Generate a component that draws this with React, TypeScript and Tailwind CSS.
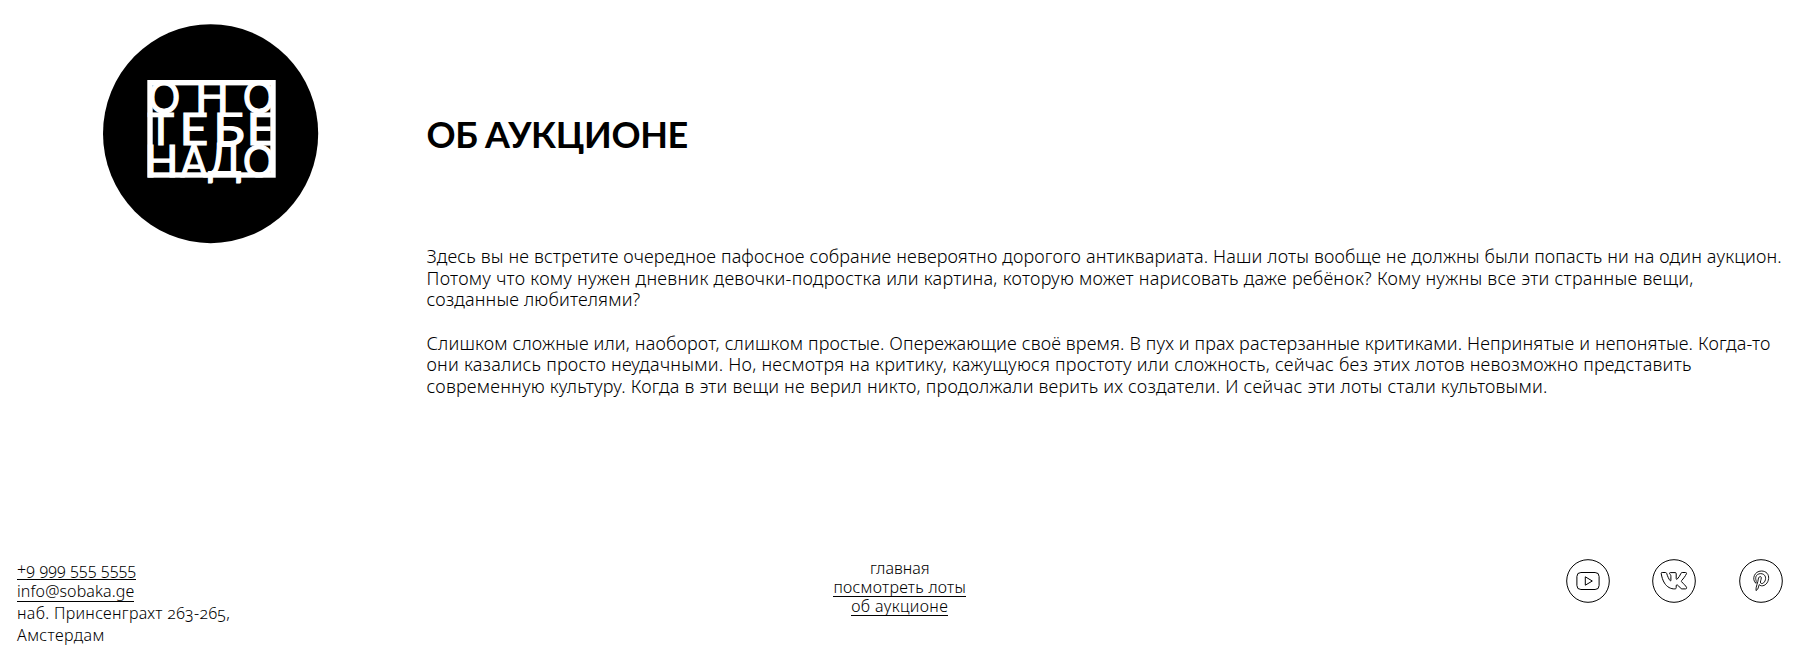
import type { ReactNode } from "react";

type Line = { text: string; className: string };

const intro: Line[] = [
  { text: "Здесь вы не встретите очередное пафосное собрание невероятно дорогого антиквариата. Наши лоты вообще не должны были попасть ни на один аукцион.", className: "tracking-[0.145px]" },
  { text: "Потому что кому нужен дневник девочки-подростка или картина, которую может нарисовать даже ребёнок? Кому нужны все эти странные вещи,", className: "tracking-[0.26px]" },
  { text: "созданные любителями?", className: "tracking-[0.15px]" },
];

const details: Line[] = [
  { text: "Слишком сложные или, наоборот, слишком простые. Опережающие своё время. В пух и прах растерзанные критиками. Непринятые и непонятые. Когда-то", className: "tracking-[0.15px]" },
  { text: "они казались просто неудачными. Но, несмотря на критику, кажущуюся простоту или сложность, сейчас без этих лотов невозможно представить", className: "tracking-[0.235px]" },
  { text: "современную культуру. Когда в эти вещи не верил никто, продолжали верить их создатели. И сейчас эти лоты стали культовыми.", className: "tracking-[0.21px]" },
];

// Letter, centre x, baseline y, horizontal scale
const letters: [string, number, number, number][] = [
  ["О", 61, 89, 0.9],
  ["Н", 109, 89, 1],
  ["О", 156, 89, 0.9],
  ["Т", 58, 121, 1],
  ["Е", 91, 121, 1.12],
  ["Б", 126, 121, 1.15],
  ["Е", 158, 121, 1.12],
  ["Н", 58.4, 153, 1],
  ["А", 91, 153, 0.88],
  ["Д", 121.8, 151, 0.95],
  ["О", 156, 153, 0.9],
];

function Logo() {
  return (
    <svg width="216" height="220" viewBox="0 0 216 220" className="block">
      <ellipse cx="107.6" cy="109.7" rx="107.6" ry="109.5" fill="#000" />
      <rect x="47" y="58.7" width="123" height="92.3" fill="none" stroke="#fff" strokeWidth="5.4" />
      {letters.map(([char, x, y, scale], i) => (
        <text
          key={i}
          transform={`translate(${x} ${y}) scale(${scale} 1)`}
          textAnchor="middle"
          fill="#fff"
          stroke="#fff"
          strokeWidth="1.2"
          fontSize="44.5"
          className="font-['Lato',sans-serif] font-normal"
        >
          {char}
        </text>
      ))}
    </svg>
  );
}

function Social({ label, children }: { label: string; children: ReactNode }) {
  return (
    <a href="#" aria-label={label}>
      <svg width="44" height="44" viewBox="0 0 44 44" fill="none" stroke="#000" strokeWidth="1" strokeLinejoin="round" className="block">
        <circle cx="22" cy="22" r="21.3" />
        {children}
      </svg>
    </a>
  );
}

function Lines({ lines }: { lines: Line[] }) {
  return (
    <p>
      {lines.map((line) => (
        <span key={line.text} className={`block whitespace-nowrap ${line.className}`}>
          {line.text}
        </span>
      ))}
    </p>
  );
}

export default function App() {
  return (
    <div className="flex h-[662px] w-[1802px] flex-col overflow-hidden bg-white font-['Noto_Sans',sans-serif] font-light text-black [font-feature-settings:'onum']">
      <main className="flex h-[558px]">
        <div className="w-[426.500px] shrink-0 pt-[24px] pl-[103px]">
          <Logo />
        </div>
        <div>
          <h1 className="mt-[113px] text-[36px] leading-[43px] font-bold tracking-[-0.35px] whitespace-nowrap [word-spacing:-1px] font-['Lato',sans-serif]">
            ОБ АУКЦИОНЕ
          </h1>
          <div className="mt-[90px] flex flex-col gap-[22px] text-[18px] leading-[21.6px]">
            <Lines lines={intro} />
            <Lines lines={details} />
          </div>
        </div>
      </main>
      <footer className="grid grid-cols-3 pr-[19.500px] pl-[17px]">
        <address className="flex flex-col items-start pt-[2px] text-[16px] leading-[21.6px] whitespace-nowrap not-italic">
          <a href="#" className="h-[20px] border-b border-black leading-[18px] tracking-[0.2px]">+9 999 555 5555</a>
          <a href="#" className="mt-[1.6px] h-[20px] border-b border-black leading-[19.6px] tracking-[0.12px]">info@sobaka.ge</a>
          <span className="mt-[1.6px] tracking-[0.31px]">наб. Принсенграхт 263-265,</span>
          <span className="tracking-[0.4px]">Амстердам</span>
        </address>
        <nav className="flex flex-col items-center text-[16px] leading-[19.2px] whitespace-nowrap">
          <a href="#" className="h-[20px] leading-[21px]">главная</a>
          <a href="#" className="h-[19px] border-b border-black tracking-[0.27px]">посмотреть лоты</a>
          <a href="#" className="h-[19px] border-b border-black tracking-[0.36px]">об аукционе</a>
        </nav>
        <div className="flex justify-end gap-[42.5px] pt-[1px]">
          <Social label="YouTube">
            <rect x="10.9" y="13.5" width="22.2" height="17" rx="4" />
            <path d="M19.3 17.8v8.4l7-4.2z" />
          </Social>
          <Social label="VK">
            <path d="M9.2 14.300c0-.6.3-.8 1-.8h3.200c.7 0 1 .3 1.300 1 .9 2.900 2.100 5.600 3.400 7.100.5.5.8.3.8-.6v-3.700c0-1.600-.9-1.900-1.300-2.700-.2-.6.1-1 .7-1h4.900c.8 0 1 .3 1 1.100v4.900c0 .8.5 1 1 .5 1.500-1.600 2.900-3.600 3.700-5.600.3-.7.6-1 1.300-1h3.400c.9 0 1.100.5.8 1.300-.8 2-3.200 5-4.700 6.700-.5.6-.4.9 0 1.400 1.600 1.600 4.100 4 4.800 5.400.4.900 0 1.600-.9 1.600h-3.500c-.8 0-1.200-.3-1.800-1-1.100-1.300-2.200-2.800-3.200-3-.6-.1-.9.2-.9 1v1.700c0 .9-.4 1.300-1.400 1.300-3.900.2-7.900-1.900-10.300-5.800-1.700-2.700-2.800-6-3.300-9.800z" />
          </Social>
          <Social label="Pinterest">
            <path strokeWidth="0.9" d="M16.900 24.300c-4.500-3.900-1.600-12.300 5.500-12.300 5 0 7.600 3.500 7.200 7.500-.5 4.700-3.700 7.500-7 7.300-1.200-.1-2-.6-2.400-1.200l-1.300 4.300-1.900 1.700c-.5-3.400 2.200-8.700 2.300-11.600 0-2.400 3.100-3.400 3-1.100 0 1.700-1.500 4-.6 5.200 1.500 1.500 4.700-.7 4.900-4.700.1-6.500-10.200-6.300-9.900.1.1 2 .9 2.300.2 4.800z" />
          </Social>
        </div>
      </footer>
    </div>
  );
}
